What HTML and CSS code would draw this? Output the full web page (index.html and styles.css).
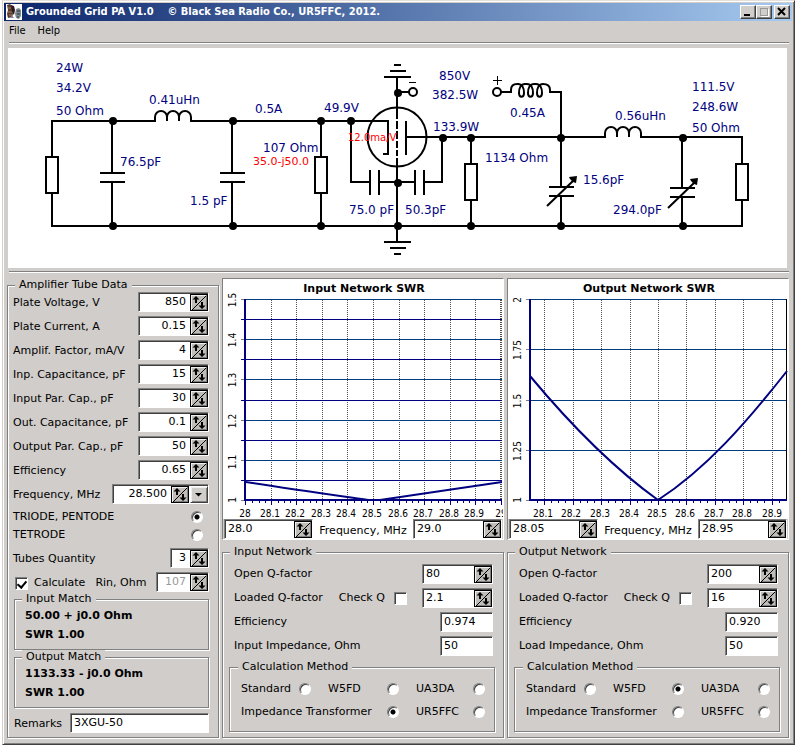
FILE: index.html
```html
<!DOCTYPE html>
<html lang="en">
<head>
<meta charset="utf-8">
<title>Grounded Grid PA V1.0</title>
<link rel="stylesheet" href="styles.css">
</head>
<body>
<svg class="defs" aria-hidden="true">
  <symbol id="updown" viewBox="0 0 16 15">
    <path d="M1 15L15.500 0.500" stroke="#000" fill="none"/>
    <path d="M5 1L8.500 4.500H6V8H4V4.500H1.500Z" fill="#000"/>
    <path d="M11 14L14.500 10.500H12V7H10V10.500H7.500Z" fill="#000"/>
  </symbol>
</svg>
<main class="window">
  <header class="titlebar">
    <svg class="app-icon" viewBox="0 0 16 16" aria-hidden="true">
      <rect width="16" height="16" fill="#fff"/>
      <path d="M1 1l3-1 2 2v4l1 4-1 3-4 1-1-4 1-4z" fill="#5a3a2e"/>
      <path d="M2 4h3M2 8h4M3 11h3" stroke="#a8806a"/>
      <path d="M5 1l3 1 1 4-1 5-2-3z" fill="#2a1c1c"/>
      <path d="M10 5l3-1 2 2v6l-2 3-3-1-1-4z" fill="#7d8c90"/>
      <path d="M11 7h3M11 10h3M11 13h2" stroke="#26343a"/>
      <path d="M4 14l2-3 2 3z" fill="#889"/>
    </svg>
    <h1 class="title">Grounded Grid PA V1.0 &nbsp;&nbsp; © Black Sea Radio Co., UR5FFC, 2012.</h1>
    <button class="winbtn" aria-label="Minimize"><svg viewBox="0 0 14 12"><path d="M3 9h6" stroke="#000" stroke-width="2"/></svg></button>
    <button class="winbtn" aria-label="Maximize"><svg viewBox="0 0 14 12"><path d="M3 2.500h8M3.500 2v8M3 9.500h8M10.500 2v8" stroke="#999" fill="none"/><path d="M4 10.500h7.500V3" stroke="#fff" fill="none"/></svg></button>
    <button class="winbtn close" aria-label="Close"><svg viewBox="0 0 14 12"><path d="M3 2l7 7M10 2l-7 7" stroke="#000" stroke-width="2"/></svg></button>
  </header>
  <nav class="menu"><a href="#file">File</a><a href="#help">Help</a></nav>
  <hr class="groove">

  <svg class="schematic" viewBox="8 48 779 220" role="img" aria-label="Amplifier schematic">
    <g class="wire">
      <path d="M52 157V121H155v-4a6 6 0 0 1 12 0v4v-4a6 6 0 0 1 12 0v4v-4a6 6 0 0 1 12 0v4H388V154H383"/>
      <path d="M52 193V226H742V200"/>
      <path d="M46 157h12v36h-12zM315 157h12v36h-12zM465 164h12v36h-12zM736 164h12v36h-12z"/>
      <path d="M112 121V173M112 182V226M100 173h25M100 182h25"/>
      <path d="M232 121V173M232 182V226M220 173h25M220 182h25"/>
      <path d="M321 121V157M321 193V226"/>
      <path d="M351 121V182H370M370 170v25M379 170v25M379 182H415M415 170v25M424 170v25M424 182H442V137"/>
      <path d="M406 121v34M406 137H605v-4a6 6 0 0 1 12 0v4v-4a6 6 0 0 1 12 0v4v-4a6 6 0 0 1 12 0v4H742V164"/>
      <circle cx="397" cy="137" r="29.500"/>
      <path d="M397 77V119M397 121v8M397 131v8M397 141v7M397 150v6M397 158V242"/>
      <path d="M394 65h7M390 71h16M384 77h27M384 242h27M390 248h16M394 254h7"/>
      <path d="M471 137V164M471 200V226"/>
      <path d="M398 92h11"/><circle cx="413" cy="92" r="4"/>
      <path d="M501 92h10v-2q0-6 6-6h1c4 0 6 4 6 9c0 5-5 5-5 0c0-5 2-9 6-9h2c4 0 6 4 6 9c0 5-5 5-5 0c0-5 2-9 6-9h2c4 0 6 4 6 9c0 5-5 5-5 0c0-5 2-9 6-9q7 0 7 6v2h11V187"/>
      <circle cx="497" cy="92" r="4"/>
      <path d="M561 196V226M549 187h25M549 196h25M547 206L574 180"/>
      <path d="M682 137V188M682 197V226M670 188h25M670 197h25M668 208L695 182"/>
    </g>
    <path class="thin" d="M409 82.500h7M493 80.500h9M497.500 76v9"/>
    <g class="node">
      <path d="M577 176l-1 7-3-1-3-3-1-2zM698 178l-1 7-3-1-3-3-1-2z"/>
      <circle cx="113" cy="121" r="4"/><circle cx="233" cy="121" r="4"/><circle cx="321" cy="121" r="4"/><circle cx="351" cy="121" r="4"/>
      <circle cx="113" cy="226" r="4"/><circle cx="233" cy="226" r="4"/><circle cx="321" cy="226" r="4"/><circle cx="398" cy="226" r="4"/>
      <circle cx="471" cy="226" r="4"/><circle cx="561" cy="226" r="4"/><circle cx="683" cy="226" r="4"/>
      <circle cx="398" cy="93" r="4"/><circle cx="398" cy="183" r="4"/><circle cx="443" cy="138" r="4"/><circle cx="471" cy="138" r="4"/>
      <circle cx="561" cy="138" r="4"/><circle cx="683" cy="138" r="4"/>
    </g>
    <g class="value">
      <text x="56" y="72">24W</text><text x="56" y="92">34.2V</text><text x="56" y="115">50 Ohm</text>
      <text x="149" y="104">0.41uHn</text><text x="255" y="113">0.5A</text><text x="324" y="112">49.9V</text>
      <text x="439" y="80">850V</text><text x="432" y="99">382.5W</text><text x="433" y="131">133.9W</text>
      <text x="510" y="117">0.45A</text><text x="615" y="120">0.56uHn</text>
      <text x="692" y="91">111.5V</text><text x="692" y="111">248.6W</text><text x="692" y="132">50 Ohm</text>
      <text x="120" y="166">76.5pF</text><text x="190" y="205">1.5 pF</text><text x="263" y="152">107 Ohm</text>
      <text x="485" y="162">1134 Ohm</text><text x="583" y="184">15.6pF</text><text x="613" y="214">294.0pF</text>
      <text x="349" y="214">75.0 pF</text><text x="405" y="214">50.3pF</text>
    </g>
    <g class="warn"><text x="253" y="165">35.0-j50.0</text><text class="small" x="348" y="141">12.0ma/V</text></g>
  </svg>
  <hr class="groove">

  <div class="columns">
    <fieldset class="group tube">
      <legend>Amplifier Tube Data</legend>
      <div class="rows">
        <div class="row"><label for="pv">Plate Voltage, V</label><div class="spin w71 num"><input id="pv" value="850"><button aria-label="Adjust"><svg><use href="#updown"/></svg></button></div></div>
        <div class="row"><label for="pc">Plate Current, A</label><div class="spin w71 num"><input id="pc" value="0.15"><button aria-label="Adjust"><svg><use href="#updown"/></svg></button></div></div>
        <div class="row"><label for="af">Amplif. Factor, mA/V</label><div class="spin w71 num"><input id="af" value="4"><button aria-label="Adjust"><svg><use href="#updown"/></svg></button></div></div>
        <div class="row"><label for="ic">Inp. Capacitance, pF</label><div class="spin w71 num"><input id="ic" value="15"><button aria-label="Adjust"><svg><use href="#updown"/></svg></button></div></div>
        <div class="row"><label for="ip">Input Par. Cap., pF</label><div class="spin w71 num"><input id="ip" value="30"><button aria-label="Adjust"><svg><use href="#updown"/></svg></button></div></div>
        <div class="row"><label for="oc">Out. Capacitance, pF</label><div class="spin w71 num"><input id="oc" value="0.1"><button aria-label="Adjust"><svg><use href="#updown"/></svg></button></div></div>
        <div class="row"><label for="op">Output Par. Cap., pF</label><div class="spin w71 num"><input id="op" value="50"><button aria-label="Adjust"><svg><use href="#updown"/></svg></button></div></div>
        <div class="row"><label for="ef">Efficiency</label><div class="spin w71 num"><input id="ef" value="0.65"><button aria-label="Adjust"><svg><use href="#updown"/></svg></button></div></div>
        <div class="row"><label for="fr">Frequency, MHz</label><div class="spin w97 num"><input id="fr" value="28.500"><button aria-label="Adjust"><svg><use href="#updown"/></svg></button><button class="drop" aria-label="Choose band"><svg viewBox="0 0 16 15"><path d="M4 6h7L7.500 9.500z"/></svg></button></div></div>
        <div class="radios">
          <label>TRIODE, PENTODE<input type="radio" name="tube" checked></label>
          <label>TETRODE<input type="radio" name="tube"></label>
        </div>
        <div class="row"><label for="tq">Tubes Quantity</label><div class="spin w39 num"><input id="tq" value="3"><button aria-label="Adjust"><svg><use href="#updown"/></svg></button></div></div>
        <div class="row"><label class="calc"><input type="checkbox" checked>Calculate</label><label for="rin">Rin, Ohm</label><div class="spin w53 num"><input id="rin" value="107" disabled><button aria-label="Adjust"><svg><use href="#updown"/></svg></button></div></div>
      </div>
      <fieldset class="group match"><legend>Input Match</legend><p>50.00 + j0.0 Ohm</p><p>SWR 1.00</p></fieldset>
      <fieldset class="group match"><legend>Output Match</legend><p>1133.33 - j0.0 Ohm</p><p>SWR 1.00</p></fieldset>
      <div class="row remarks"><label for="rem">Remarks</label><input class="box" id="rem" value="3XGU-50"></div>
    </fieldset>

    <section class="side">
      <div class="chart">
        <svg viewBox="0 0 280 240" role="img" aria-label="Input Network SWR">
          <text class="heading" x="141" y="13">Input Network SWR</text>
          <path class="vgrid" d="M48.500 21V221M73.500 21V221M99.500 21V221M124.500 21V221M150.500 21V221M176.500 21V221M201.500 21V221M227.500 21V221M252.500 21V221M277.500 21V221M278.500 21V221"/>
          <path class="minor" d="M18 40.500H279M18 80.500H279M18 121.500H279M18 161.500H279M18 201.500H279"/>
          <path class="major" d="M22 20.500H279M22 60.500H279M22 100.500H279M22 141.500H279M22 181.500H279"/>
          <path class="tick" d="M18 20.500h5M18 60.500h5M18 100.500h5M18 141.500h5M18 181.500h5M18 221.500h5"/>
          <path class="minor" d="M22.500 222v4M29.500 222v2M36.500 222v2M42.500 222v2M48.500 222v4M55.500 222v2M61.500 222v2M67.500 222v2M73.500 222v4M80.500 222v2M87.500 222v2M93.500 222v2M99.500 222v4M106.500 222v2M112.500 222v2M118.500 222v2M124.500 222v4M131.500 222v2M138.500 222v2M144.500 222v2M150.500 222v4M157.500 222v2M163.500 222v2M170.500 222v2M176.500 222v4M183.500 222v2M189.500 222v2M195.500 222v2M201.500 222v4M208.500 222v2M215.500 222v2M221.500 222v2M227.500 222v4M234.500 222v2M240.500 222v2M246.500 222v2M252.500 222v4M259.500 222v2M266.500 222v2M272.500 222v2M278.500 222v4"/>
          <path class="axis" d="M22 20V221H279"/>
          <path class="curve" d="M23 203C60 209 110 216 145 221L157 221C190 216 240 209 279 203"/>
          <g class="axis-label"><text x="22" y="238">28</text><text x="47" y="238">28.1</text><text x="72" y="238">28.2</text><text x="98" y="238">28.3</text><text x="123" y="238">28.4</text><text x="149" y="238">28.5</text><text x="175" y="238">28.6</text><text x="200" y="238">28.7</text><text x="226" y="238">28.8</text><text x="251" y="238">28.9</text><text x="278" y="238">29</text></g>
          <g class="axis-label"><text transform="translate(13 21) rotate(-90)">1.5</text><text transform="translate(13 61) rotate(-90)">1.4</text><text transform="translate(13 101) rotate(-90)">1.3</text><text transform="translate(13 142) rotate(-90)">1.2</text><text transform="translate(13 183) rotate(-90)">1.1</text><text transform="translate(13 221) rotate(-90)">1</text></g>
        </svg>
        <div class="range">
          <div class="spin"><input aria-label="From" value="28.0"><button aria-label="Adjust"><svg><use href="#updown"/></svg></button></div>
          <span>Frequency, MHz</span>
          <div class="spin"><input aria-label="To" value="29.0"><button aria-label="Adjust"><svg><use href="#updown"/></svg></button></div>
        </div>
      </div>
      <fieldset class="group net">
        <legend>Input Network</legend>
        <div class="rows">
          <div class="row"><label for="iq">Open Q-factor</label><div class="spin w71"><input id="iq" value="80"><button aria-label="Adjust"><svg><use href="#updown"/></svg></button></div></div>
          <div class="row"><label for="il">Loaded Q-factor</label><label class="check">Check Q<input type="checkbox"></label><div class="spin w71"><input id="il" value="2.1"><button aria-label="Adjust"><svg><use href="#updown"/></svg></button></div></div>
          <div class="row"><label for="ie">Efficiency</label><input class="box w53" id="ie" value="0.974"></div>
          <div class="row"><label for="ii">Input Impedance, Ohm</label><input class="box w53" id="ii" value="50"></div>
        </div>
        <fieldset class="group">
          <legend>Calculation Method</legend>
          <div class="methods">
            <label>Standard<input type="radio" name="im"></label><label>W5FD<input type="radio" name="im"></label><label>UA3DA<input type="radio" name="im"></label>
            <label class="wide">Impedance Transformer<input type="radio" name="im" checked></label><label>UR5FFC<input type="radio" name="im"></label>
          </div>
        </fieldset>
      </fieldset>
    </section>

    <section class="side">
      <div class="chart">
        <svg viewBox="0 0 280 240" role="img" aria-label="Output Network SWR">
          <text class="heading" x="141" y="13">Output Network SWR</text>
          <path class="vgrid" d="M36.500 21V221M65.500 21V221M93.500 21V221M122.500 21V221M150.500 21V221M178.500 21V221M207.500 21V221M235.500 21V221M264.500 21V221"/>
          <path class="major" d="M22 20.500H279M22 70.500H279M22 121.500H279M22 171.500H279"/>
          <path class="tick" d="M18 20.500h5M18 70.500h5M18 121.500h5M18 171.500h5M18 221.500h5"/>
          <path class="minor" d="M29.500 222v2M36.500 222v4M43.500 222v2M50.500 222v2M57.500 222v2M65.500 222v4M72.500 222v2M79.500 222v2M86.500 222v2M93.500 222v4M100.500 222v2M107.500 222v2M114.500 222v2M122.500 222v4M129.500 222v2M136.500 222v2M143.500 222v2M150.500 222v4M157.500 222v2M164.500 222v2M171.500 222v2M178.500 222v4M185.500 222v2M192.500 222v2M199.500 222v2M207.500 222v4M214.500 222v2M221.500 222v2M228.500 222v2M235.500 222v4M242.500 222v2M249.500 222v2M256.500 222v2M264.500 222v4M271.500 222v2"/>
          <path class="edge" d="M278.500 20V222"/>
          <path class="axis" d="M22 20V221H279"/>
          <path class="curve" d="M22 97C62 145 104 188 150 221C198 190 238 144 279 92"/>
          <g class="axis-label"><text x="35" y="238">28.1</text><text x="63" y="238">28.2</text><text x="92" y="238">28.3</text><text x="121" y="238">28.4</text><text x="149" y="238">28.5</text><text x="177" y="238">28.6</text><text x="206" y="238">28.7</text><text x="234" y="238">28.8</text><text x="264" y="238">28.9</text></g>
          <g class="axis-label"><text transform="translate(13 21) rotate(-90)">2</text><text transform="translate(13 71) rotate(-90)">1.75</text><text transform="translate(13 122) rotate(-90)">1.5</text><text transform="translate(13 172) rotate(-90)">1.25</text><text transform="translate(13 221) rotate(-90)">1</text></g>
        </svg>
        <div class="range">
          <div class="spin"><input aria-label="From" value="28.05"><button aria-label="Adjust"><svg><use href="#updown"/></svg></button></div>
          <span>Frequency, MHz</span>
          <div class="spin"><input aria-label="To" value="28.95"><button aria-label="Adjust"><svg><use href="#updown"/></svg></button></div>
        </div>
      </div>
      <fieldset class="group net">
        <legend>Output Network</legend>
        <div class="rows">
          <div class="row"><label for="oq">Open Q-factor</label><div class="spin w71"><input id="oq" value="200"><button aria-label="Adjust"><svg><use href="#updown"/></svg></button></div></div>
          <div class="row"><label for="ol">Loaded Q-factor</label><label class="check">Check Q<input type="checkbox"></label><div class="spin w71"><input id="ol" value="16"><button aria-label="Adjust"><svg><use href="#updown"/></svg></button></div></div>
          <div class="row"><label for="oe">Efficiency</label><input class="box w53" id="oe" value="0.920"></div>
          <div class="row"><label for="oi">Load Impedance, Ohm</label><input class="box w53" id="oi" value="50"></div>
        </div>
        <fieldset class="group">
          <legend>Calculation Method</legend>
          <div class="methods">
            <label>Standard<input type="radio" name="om"></label><label>W5FD<input type="radio" name="om" checked></label><label>UA3DA<input type="radio" name="om"></label>
            <label class="wide">Impedance Transformer<input type="radio" name="om"></label><label>UR5FFC<input type="radio" name="om"></label>
          </div>
        </fieldset>
      </fieldset>
    </section>
  </div>
</main>
</body>
</html>
```
FILE: styles.css
```css
:root {
  --face: #d0cdca;
  --shade: #808080;
  --dark: #404040;
  --navy: #000080;
}
* { box-sizing: border-box; }
body {
  margin: 0;
  padding-left: 2px;
  background: #fff;
  color: #000;
  font: 11px/14px Verdana, "DejaVu Sans", sans-serif;
}
input, button { font: inherit; color: inherit; margin: 0; border-radius: 0; }
.defs { display: none; }

.window {
  background: var(--face);
  border: 1px solid;
  border-color: #e4e0dc var(--dark) var(--dark) #d4d0c8;
  box-shadow: inset 1px 1px #fff, inset -1px -1px var(--shade);
  padding: 2px 2px 6px 1px;
}
.titlebar {
  display: flex;
  align-items: center;
  height: 18px;
  padding: 0 2px;
  background: linear-gradient(90deg, #0a246a, #a6caf0);
}
.app-icon { width: 16px; height: 16px; }
.title {
  flex: 1;
  margin: 0 0 0 4px;
  color: #fff;
  font: bold 11px/16px Tahoma, "DejaVu Sans Condensed", sans-serif;
  white-space: nowrap;
}
.winbtn {
  width: 16px;
  height: 14px;
  padding: 0;
  background: var(--face);
  border: 1px solid;
  border-color: #fff var(--dark) var(--dark) #fff;
  box-shadow: inset -1px -1px var(--shade);
}
.winbtn svg { display: block; width: 14px; height: 12px; }
.close { margin-left: 2px; }
.menu {
  display: flex;
  gap: 12px;
  height: 21px;
  padding: 3px 5px;
  font-family: Tahoma, "DejaVu Sans Condensed", sans-serif;
}
.menu a { color: inherit; text-decoration: none; }
.groove {
  height: 2px;
  margin: 0 3px 0 5px;
  border: 0;
  border-top: 1px solid var(--shade);
  border-bottom: 1px solid #fff;
}

.schematic { display: block; width: calc(100% - 9px); margin: 4px 5px 3px 4px; background: #fff; }
.wire { fill: none; stroke: #000; stroke-width: 2; }
.thin { fill: none; stroke: #000; }
.value { fill: var(--navy); font-size: 12px; }
.warn { fill: #f00; font-size: 11px; }
.small { font-size: 10px; }

.columns {
  display: grid;
  grid-template-columns: minmax(0, 212fr) minmax(0, 282fr) minmax(0, 282fr);
  gap: 3px;
  padding: 5px 3px 0;
}
.group {
  min-width: 0;
  margin: 0;
  padding: 0;
  border: 1px solid var(--shade);
  box-shadow: 1px 1px #fff, inset 1px 1px #fff;
}
.group legend { margin-left: 8px; padding: 0 4px; background: var(--face); }
.tube { padding: 0 9px 4px 5px; }
.tube > legend { margin-left: 2px; }
.rows { display: flex; flex-direction: column; gap: 4px; }
.row { display: flex; align-items: center; height: 20px; white-space: nowrap; }
.row > :last-child { margin-left: auto; }
.tube .row > label { padding-top: 2px; }

.spin, .box {
  height: 20px;
  background: #fff;
  border: 1px solid;
  border-color: var(--shade) #fff #fff var(--shade);
  box-shadow: inset 1px 1px var(--dark);
}
.spin { display: flex; padding: 1px 0 0 1px; }
.spin input { flex: 1; min-width: 0; width: 0; border: 0; padding: 0 4px 2px 2px; background: none; }
.spin input:disabled { color: #999; }
.num input { text-align: right; }
.box { padding: 0 3px 2px; min-width: 0; }
.w39 { width: 39px; }
.w53 { width: 53px; }
.w71 { width: 71px; }
.w97 { width: 97px; }
.spin button {
  flex: none;
  width: 18px;
  padding: 0;
  background: #c0bcb8;
  border: 1px solid #000;
  box-shadow: inset 1px 1px #eee, inset -1px -1px var(--shade);
}
.spin button svg { display: block; width: 16px; height: 15px; }
.spin .drop { margin-left: 1px; background: var(--face); border-color: #fff var(--dark) var(--dark) #fff; }

input[type="radio"], input[type="checkbox"] {
  appearance: none;
  flex: none;
  width: 12px;
  height: 12px;
  background: #fff;
  border: 1px solid;
  border-color: var(--shade) #fff #fff var(--shade);
  box-shadow: inset 1px 1px var(--dark);
}
input[type="radio"] { border-radius: 50%; }
input[type="radio"]:checked { background: radial-gradient(circle, #000 2px, #fff 3px); }
input[type="checkbox"] { width: 13px; height: 13px; }
input[type="checkbox"]:checked {
  display: grid;
  place-items: center;
}
input[type="checkbox"]:checked::before {
  content: "";
  width: 4px;
  height: 7px;
  border: solid #000;
  border-width: 0 2px 2px 0;
  transform: rotate(40deg);
}
.radios label { display: flex; align-items: center; justify-content: space-between; height: 18px; padding-right: 6px; }
.calc { display: flex; align-items: center; gap: 6px; margin: 0 10px 0 2px; }

.match { margin-left: 1px; padding: 0 0 5px 10px; }
.match legend { margin-left: -3px; }
.match p { margin: 0; font-weight: bold; line-height: 19px; }
.remarks { margin: 5px 0 0 1px; gap: 8px; }
.remarks .box { flex: 1; }

.side { display: flex; flex-direction: column; gap: 5px; }
.chart {
  background: #fff;
  border: 1px solid;
  border-color: var(--shade) #fff #fff var(--shade);
}
.chart svg { display: block; width: 100%; }
.heading { font-weight: bold; text-anchor: middle; }
.vgrid { stroke: #505050; fill: none; stroke-dasharray: 1 1; }
.minor { stroke: var(--navy); }
.major { stroke: #003c80; }
.tick { stroke: var(--shade); }
.edge { stroke: #000; }
.axis { fill: none; stroke: var(--navy); stroke-width: 2; }
.curve { fill: none; stroke: var(--navy); stroke-width: 2; }
.axis-label { font: 10px Tahoma, "DejaVu Sans Condensed", sans-serif; text-anchor: middle; }
.range { display: flex; align-items: center; justify-content: space-between; background: var(--face); padding: 0 1px; }
.range span { align-self: stretch; flex: 1; padding-top: 5px; background: #fff; text-align: center; white-space: nowrap; }
.chart .range svg { width: 16px; }
.range .spin { width: 89px; }

.net { padding: 0 8px 5px 6px; }
.net > legend { margin-left: 1px; }
.net .rows { padding: 5px 2px 4px 5px; }
.check { display: flex; align-items: center; gap: 9px; margin-left: 16px; }
.methods {
  display: grid;
  grid-template-columns: 70px minmax(0, 1fr) 69px;
  column-gap: 17px;
  padding: 3px 9px 8px 11px;
  white-space: nowrap;
}
.methods label { display: flex; align-items: center; justify-content: space-between; height: 23px; }
.wide { grid-column: span 2; }
```
